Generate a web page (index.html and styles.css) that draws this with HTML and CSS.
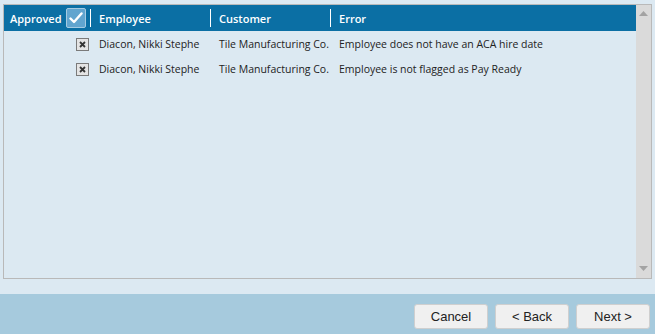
FILE: index.html
```html
<!DOCTYPE html>
<html>
<head>
<meta charset="utf-8">
<link rel="stylesheet" href="styles.css">
</head>
<body>
<div class="page">
  <div class="grid">
    <div class="main">
      <div class="head">
        <div class="hcell c-appr">
          <span>Approved</span>
          <span class="hcheck">
            <svg width="14" height="12" viewBox="0 0 14 12"><path d="M1.5 6.5 L5 10 L12.5 1.5" fill="none" stroke="#fff" stroke-width="2.4" stroke-linecap="round" stroke-linejoin="round"/></svg>
          </span>
        </div>
        <div class="hcell c-emp">Employee</div>
        <div class="hcell c-cust">Customer</div>
        <div class="hcell c-err">Error</div>
      </div>
      <div class="row">
        <div class="cell c-appr"><span class="xbox"><svg width="7" height="7" viewBox="0 0 7 7"><path d="M1 1 L6 6 M6 1 L1 6" stroke="#333" stroke-width="1.8"/></svg></span></div>
        <div class="cell c-emp">Diacon, Nikki Stephe</div>
        <div class="cell c-cust">Tile Manufacturing Co.</div>
        <div class="cell c-err">Employee does not have an ACA hire date</div>
      </div>
      <div class="row">
        <div class="cell c-appr"><span class="xbox"><svg width="7" height="7" viewBox="0 0 7 7"><path d="M1 1 L6 6 M6 1 L1 6" stroke="#333" stroke-width="1.8"/></svg></span></div>
        <div class="cell c-emp">Diacon, Nikki Stephe</div>
        <div class="cell c-cust">Tile Manufacturing Co.</div>
        <div class="cell c-err">Employee is not flagged as Pay Ready</div>
      </div>
    </div>
    <div class="scroll">
      <svg class="arr" width="9" height="5" viewBox="0 0 9 5"><path d="M0 5 L4.5 0 L9 5 Z" fill="#a3a3a3"/></svg>
      <svg class="arr" width="9" height="5" viewBox="0 0 9 5"><path d="M0 0 L4.5 5 L9 0 Z" fill="#a3a3a3"/></svg>
    </div>
  </div>
</div>
<div class="footer">
  <button class="btn">Cancel</button>
  <button class="btn">&lt; Back</button>
  <button class="btn">Next &gt;</button>
</div>
</body>
</html>
```

FILE: styles.css
```css
html, body {
  margin: 0;
  padding: 0;
}
body {
  background: #dce9f2;
  font-family: "Open Sans", "Noto Sans", sans-serif;
  width: 655px;
  height: 334px;
  overflow: hidden;
}
.page {
  padding: 4px 0 0 3px;
  height: 294px;
  box-sizing: border-box;
}
.grid {
  width: 649px;
  height: 275px;
  box-sizing: border-box;
  border: 1px solid #b9b9b9;
  display: flex;
}
.main {
  flex: 1;
  display: flex;
  flex-direction: column;
}
.head {
  height: 26px;
  background: #0b6fa4;
  display: flex;
  align-items: center;
  color: #fff;
  font-size: 11px;
  font-weight: 600;
}
.hcell {
  height: 26px;
  display: flex;
  align-items: center;
  box-sizing: border-box;
  position: relative;
}
.c-appr { width: 86px; }
.c-emp { width: 120px; }
.c-cust { width: 120px; }
.c-err { flex: 1; }
.head .c-appr {
  padding-left: 6px;
}
.head .c-emp, .head .c-cust, .head .c-err {
  padding-left: 9px;
}
.head .c-emp::before, .head .c-cust::before, .head .c-err::before {
  content: "";
  position: absolute;
  left: 0;
  top: 4px;
  height: 18px;
  width: 1px;
  background: #fff;
}
.hcheck {
  margin-left: 4px;
  width: 20px;
  height: 20px;
  box-sizing: border-box;
  border: 1px solid #a5cbe2;
  background: #62a5cf;
  border-radius: 2px;
  display: flex;
  align-items: center;
  justify-content: center;
}
.row {
  height: 24px;
  display: flex;
  align-items: center;
  font-size: 10.5px;
  color: #222;
  padding-top: 1px;
}
.cell {
  box-sizing: border-box;
  white-space: nowrap;
  overflow: hidden;
}
.row .c-emp, .row .c-cust, .row .c-err {
  padding-left: 9px;
}
.row .c-appr {
  display: flex;
  justify-content: flex-end;
  padding-right: 1px;
}
.xbox {
  width: 13px;
  height: 13px;
  box-sizing: border-box;
  border: 1px solid #7a7a7a;
  background: #e4e4e4;
  display: flex;
  align-items: center;
  justify-content: center;
}
.scroll {
  width: 15px;
  background: #dadada;
  display: flex;
  flex-direction: column;
  justify-content: space-between;
  align-items: center;
  padding: 6px 0 7px;
  box-sizing: border-box;
}
.footer {
  height: 40px;
  background: #a6cadd;
  display: flex;
  justify-content: flex-end;
  align-items: flex-start;
  gap: 7px;
  padding: 10px 5px 0 0;
  box-sizing: border-box;
}
.btn {
  width: 74px;
  height: 25px;
  margin: 0;
  border: 1px solid #cfcfcf;
  border-radius: 3px;
  background: #f0f0f0;
  font-family: "Liberation Sans", Arial, sans-serif;
  font-size: 13px;
  color: #222;
  padding: 0;
}
```
